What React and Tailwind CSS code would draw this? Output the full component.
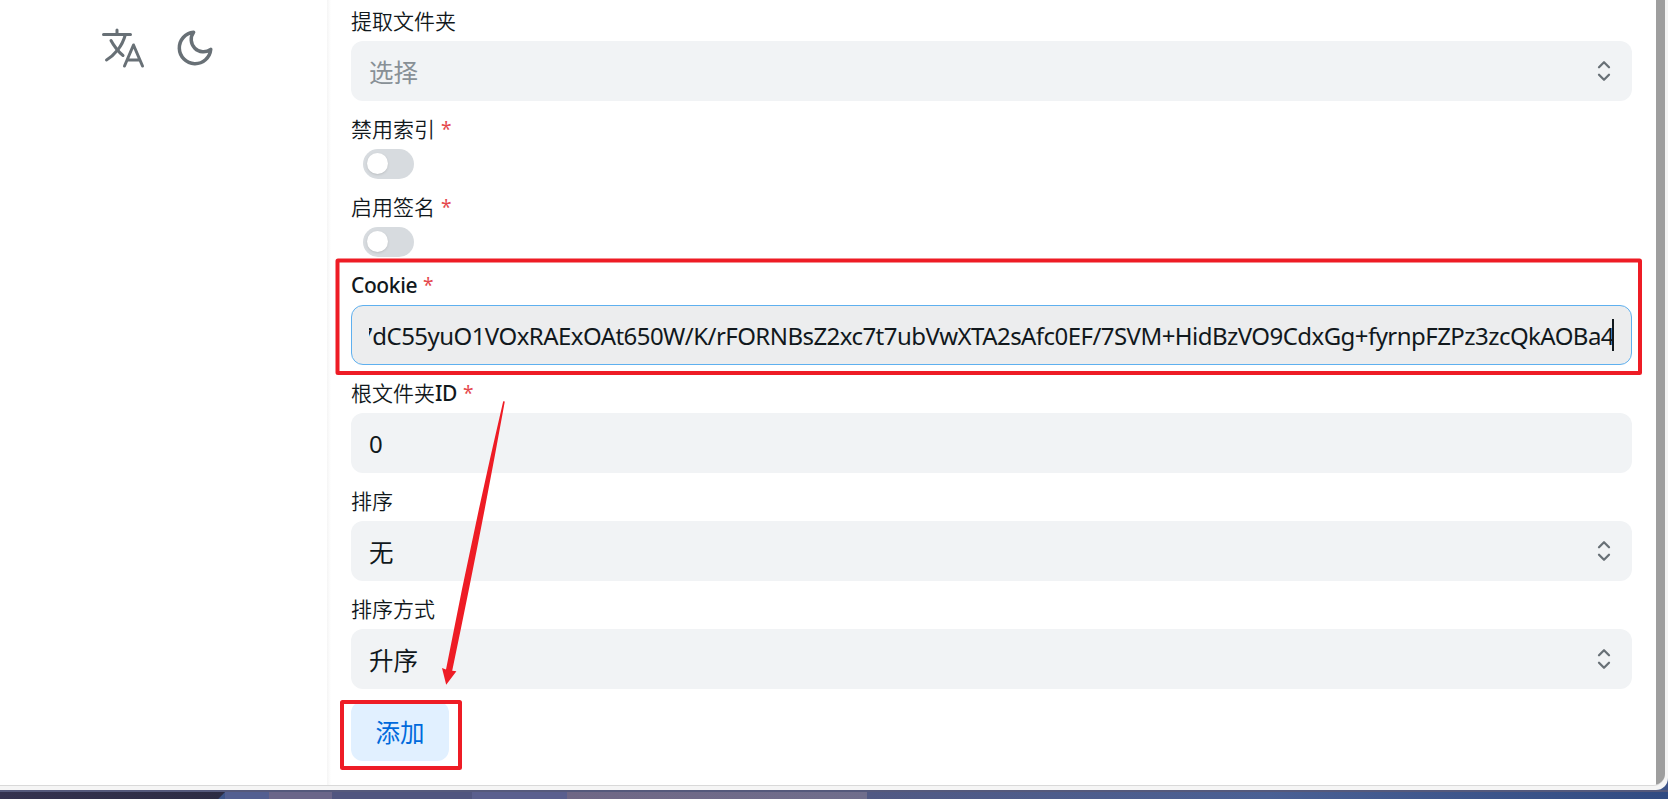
import React from 'react';
import { FiMoon } from 'react-icons/fi';
import { IoLanguageOutline } from 'react-icons/io5';

const SelectIcon = () => (
  <svg
    viewBox="0 0 24 24"
    className="w-[30px] h-[30px] text-[#687076]"
    fill="none"
    stroke="currentColor"
    strokeWidth="1.8"
    strokeLinecap="round"
    strokeLinejoin="round"
  >
    <path d="M8 9l4 -4l4 4" />
    <path d="M16 15l-4 4l-4 -4" />
  </svg>
);

const Field = ({ label, latin, required, children }) => (
  <div className="flex flex-col">
    <label className="h-[31.5px] mb-[4.5px] pt-0.5 flex items-center text-[21px] leading-[31.5px] whitespace-pre">
      <span className="font-[350]">{label}</span>
      {latin && <span className="font-medium tracking-[-0.4px]">{latin}</span>}
      {required && <span className="ml-1.5 text-[19px] text-[#e5484d]">*</span>}
    </label>
    {children}
  </div>
);

const Select = ({ value, placeholder }) => (
  <div className="h-[60px] rounded-xl bg-[#f1f3f5] pl-[18px] pr-[13px] flex items-center justify-between text-[24.5px]">
    {value ? <span className="pt-[5px]">{value}</span> : <span className="pt-[5px] text-[#889096]">{placeholder}</span>}
    <SelectIcon />
  </div>
);

const Toggle = () => (
  <div className="ml-3 w-[51px] h-[30px] rounded-full bg-[#d7dbdf] flex items-center px-1">
    <div className="w-[21px] h-[21px] mb-px rounded-full bg-white shadow-sm" />
  </div>
);

const Annotations = () => (
  <svg className="absolute inset-0 pointer-events-none" width="1668" height="799" fill="none">
    <rect x="337.5" y="260.5" width="1302.5" height="112.5" rx="0.5" stroke="#ee1c25" strokeWidth="4" />
    <rect x="342" y="702" width="118" height="66" rx="0.5" stroke="#ee1c25" strokeWidth="4" />
    <path d="M503.2 401.2L504.8 401.6Q482 528 452.2 670.8L456.4 671.2L446.2 684.8L442 668L446 669.6Q472 535 503.2 401.2Z" fill="#ee1c25" />
  </svg>
);

const App = () => {
  return (
    <div className="relative w-[1668px] h-[799px] overflow-hidden flex flex-col bg-[#3d5488] text-[#11181c] font-['Noto_Sans','Noto_Sans_CJK_SC',sans-serif]">
      <div className="h-[790px] bg-[#f5f5f5] rounded-br-xl pr-[3px] pb-1">
        <div className="h-[786px] bg-white border-b border-[#d9d9d9] rounded-br-xl overflow-hidden flex">
          <aside className="w-[327px] shrink-0 pt-6 pl-[99px] flex gap-[27px] text-[#687076]">
            <IoLanguageOutline className="w-12 h-12" />
            <FiMoon className="w-[42px] h-[42px] mt-[3px]" />
          </aside>
          <div className="w-1 shrink-0 bg-linear-to-r from-[#f5f5f5] to-white" />
          <main className="flex-1 min-w-0 pt-[5px] pl-5 pr-6 flex flex-col gap-3">
            <Field label="提取文件夹">
              <Select placeholder="选择" />
            </Field>
            <Field label="禁用索引" required>
              <Toggle />
            </Field>
            <Field label="启用签名" required>
              <Toggle />
            </Field>
            <Field latin="Cookie" required>
              <div className="h-[60px] rounded-xl border border-[#5eb0ef] bg-[#ecedee] px-[17px] flex items-center">
                <div className="flex-1 min-w-0 overflow-hidden flex justify-end items-center text-2xl">
                  <span className="pt-0.5 whitespace-nowrap tracking-[-0.55px]">
                    7dC55yuO1VOxRAExOAt650W/K/rFORNBsZ2xc7t7ubVwXTA2sAfc0EF/7SVM+HidBzVO9CdxGg+fyrnpFZPz3zcQkAOBa4
                  </span>
                  <span className="w-0.5 h-8 -ml-0.5 shrink-0 bg-[#11181c]" />
                </div>
              </div>
            </Field>
            <Field label="根文件夹" latin="ID" required>
              <div className="h-[60px] rounded-xl bg-[#f1f3f5] px-[18px] pt-0.5 flex items-center text-2xl">0</div>
            </Field>
            <Field label="排序">
              <Select value="无" />
            </Field>
            <Field label="排序方式">
              <Select value="升序" />
            </Field>
            <button className="w-[98px] h-[60px] shrink-0 pt-[5px] rounded-xl bg-[#e1f0ff] text-[#006adc] text-[24.5px]">
              添加
            </button>
          </main>
          <div className="w-[9px] shrink-0 bg-[#9e9e9e]" />
        </div>
      </div>
      <div className="h-[9px] flex border-t-2 border-[#55597b]">
        <div className="w-[225px] bg-linear-to-r from-[#34324f] to-[#2d2c43] [clip-path:polygon(0_0,100%_0,97%_100%,0_100%)]" />
        <div className="w-[44px] bg-[#535f91]" />
        <div className="w-[63px] bg-[#6b6689]" />
        <div className="w-[140px] bg-[#50557f]" />
        <div className="w-[95px] bg-[#5a5f8e]" />
        <div className="w-[300px] bg-linear-to-r from-[#6f6785] to-[#706e8c]" />
        <div className="flex-1 bg-linear-to-r from-[#515983] via-[#4a6094] to-[#314b82]" />
      </div>
      <Annotations />
    </div>
  );
};

export default App;
